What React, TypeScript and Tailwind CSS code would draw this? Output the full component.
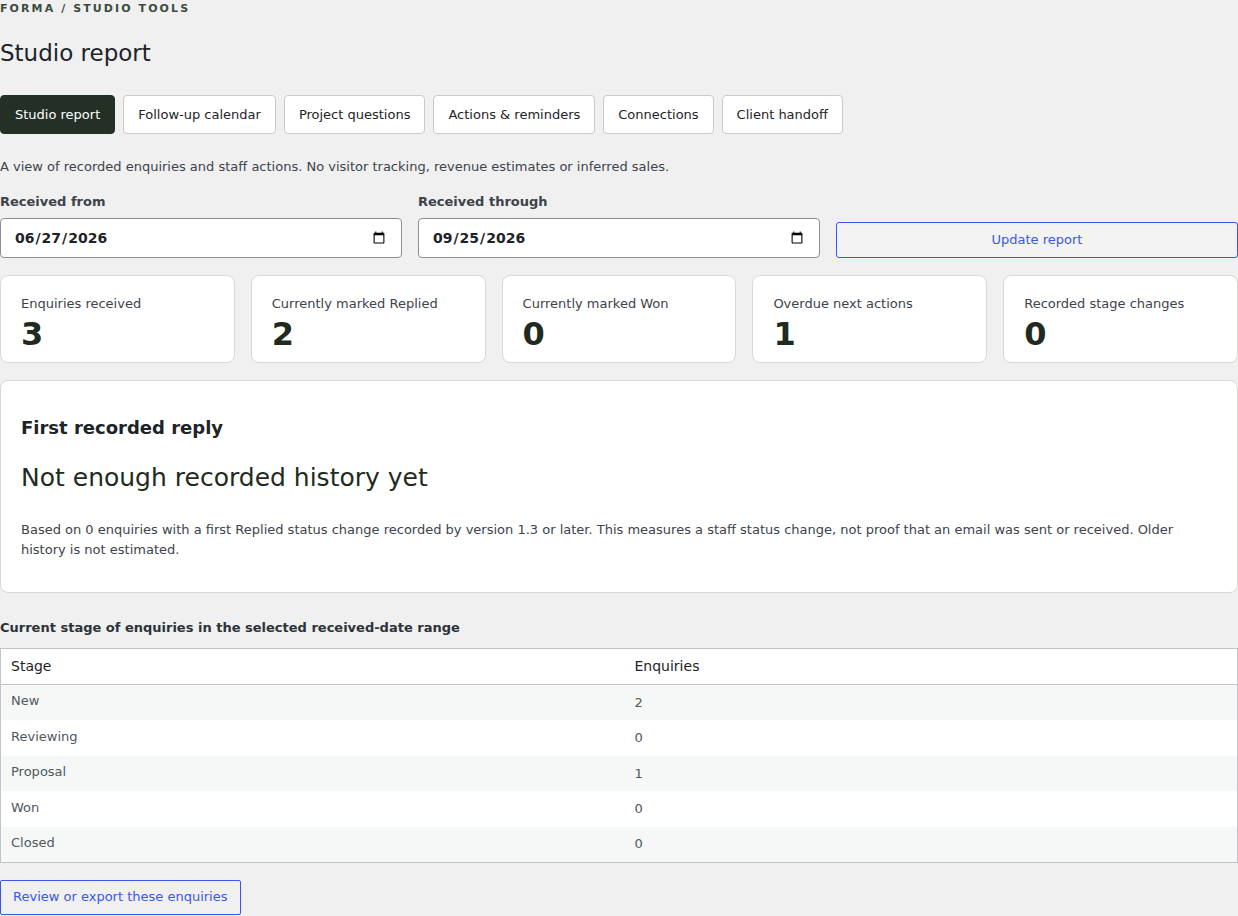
import React from "react";

const tabs = [
  "Studio report",
  "Follow-up calendar",
  "Project questions",
  "Actions & reminders",
  "Connections",
  "Client handoff",
];

const stats = [
  { label: "Enquiries received", value: 3 },
  { label: "Currently marked Replied", value: 2 },
  { label: "Currently marked Won", value: 0 },
  { label: "Overdue next actions", value: 1 },
  { label: "Recorded stage changes", value: 0 },
];

const stages = [
  { stage: "New", count: 2 },
  { stage: "Reviewing", count: 0 },
  { stage: "Proposal", count: 1 },
  { stage: "Won", count: 0 },
  { stage: "Closed", count: 0 },
];

const DateField: React.FC<{ label: string; value: string }> = ({ label, value }) => (
  <label className="flex flex-col">
    <span className="text-[13px] leading-5 font-bold text-[#3c434a]">{label}</span>
    <input
      type="date"
      defaultValue={value}
      className="mt-[6px] h-[40px] w-full rounded-[4px] border border-[#8c8f94] bg-white px-[13px] text-[14px] font-bold text-[#1d2327]"
    />
  </label>
);

export default function App() {
  return (
    <div className="min-h-screen bg-[#f0f0f1] font-['DejaVu_Sans',sans-serif] text-[#1d2327]">
      <p className="pt-[1px] text-[11px] leading-4 font-bold uppercase tracking-[0.19em] text-[#3b4a3e]">
        Forma / Studio tools
      </p>
      <h1 className="mt-[22px] text-[23px] leading-[29px] font-normal">Studio report</h1>

      {/* section tabs */}
      <nav className="mt-[27px] flex gap-[8px]">
        {tabs.map((tab, i) => (
          <button
            key={tab}
            className={
              i === 0
                ? "h-[39px] rounded-[4px] border border-[#243026] bg-[#243026] px-[14px] text-[13px] text-white"
                : "h-[39px] rounded-[4px] border border-[#c9cbc6] bg-white px-[14px] text-[13px] text-[#1d2327]"
            }
          >
            {tab}
          </button>
        ))}
      </nav>

      <p className="mt-[23px] text-[13px] leading-5 text-[#3c434a]">
        A view of recorded enquiries and staff actions. No visitor tracking, revenue estimates or inferred sales.
      </p>

      <div className="mt-[15px] grid grid-cols-3 items-end gap-4">
        <DateField label="Received from" value="2026-06-27" />
        <DateField label="Received through" value="2026-09-25" />
        <button className="h-[36px] rounded-[3px] border border-[#3858e9] bg-[#f3f3f4] text-[13px] text-[#3858e9]">
          Update report
        </button>
      </div>

      <div className="mt-[17px] grid grid-cols-5 gap-4">
        {stats.map((s) => (
          <div
            key={s.label}
            className="h-[88px] rounded-[8px] border border-[#d8d8d4] bg-white px-[20px] pt-[18px]"
          >
            <div className="text-[13px] leading-5 text-[#3c434a]">{s.label}</div>
            <div className="mt-[4px] text-[32px] leading-8 font-bold text-[#1f2a21]">{s.value}</div>
          </div>
        ))}
      </div>

      <section className="mt-[17px] rounded-[8px] border border-[#d8d8d4] bg-white px-[20px] pt-[35px] pb-[32px]">
        <h2 className="text-[18px] leading-6 font-bold">First recorded reply</h2>
        <p className="mt-[22px] text-[25px] leading-8 text-[#1f2a21]">Not enough recorded history yet</p>
        <p className="mt-[26px] text-[13px] leading-5 text-[#3c434a]">
          Based on 0 enquiries with a first Replied status change recorded by version 1.3 or later. This measures a
          staff status change, not proof that an email was sent or received. Older history is not estimated.
        </p>
      </section>

      <h3 className="mt-[25px] text-[13px] leading-5 font-bold text-[#2c3338]">
        Current stage of enquiries in the selected received-date range
      </h3>

      <table className="mt-[10px] w-full border border-[#c3c4c7] bg-white text-left">
        <thead>
          <tr className="h-[36px] border-b border-[#c3c4c7]">
            <th className="w-[624px] px-[10px] text-[14px] font-normal text-[#1d2327]">Stage</th>
            <th className="px-[10px] text-[14px] font-normal text-[#1d2327]">Enquiries</th>
          </tr>
        </thead>
        <tbody>
          {stages.map((row, i) => (
            <tr key={row.stage} className={i % 2 === 0 ? "h-[35.5px] bg-[#f6f7f7]" : "h-[35.5px] bg-white"}>
              <td className="px-[10px] pb-[3px] text-[13px] text-[#50575e]">{row.stage}</td>
              <td className="px-[10px] text-[13px] text-[#50575e]">{row.count}</td>
            </tr>
          ))}
        </tbody>
      </table>

      <button className="mt-[17px] mb-[2px] h-[35px] rounded-[2px] border border-[#3858e9] px-[12px] text-[13px] text-[#3858e9]">
        Review or export these enquiries
      </button>
    </div>
  );
}
